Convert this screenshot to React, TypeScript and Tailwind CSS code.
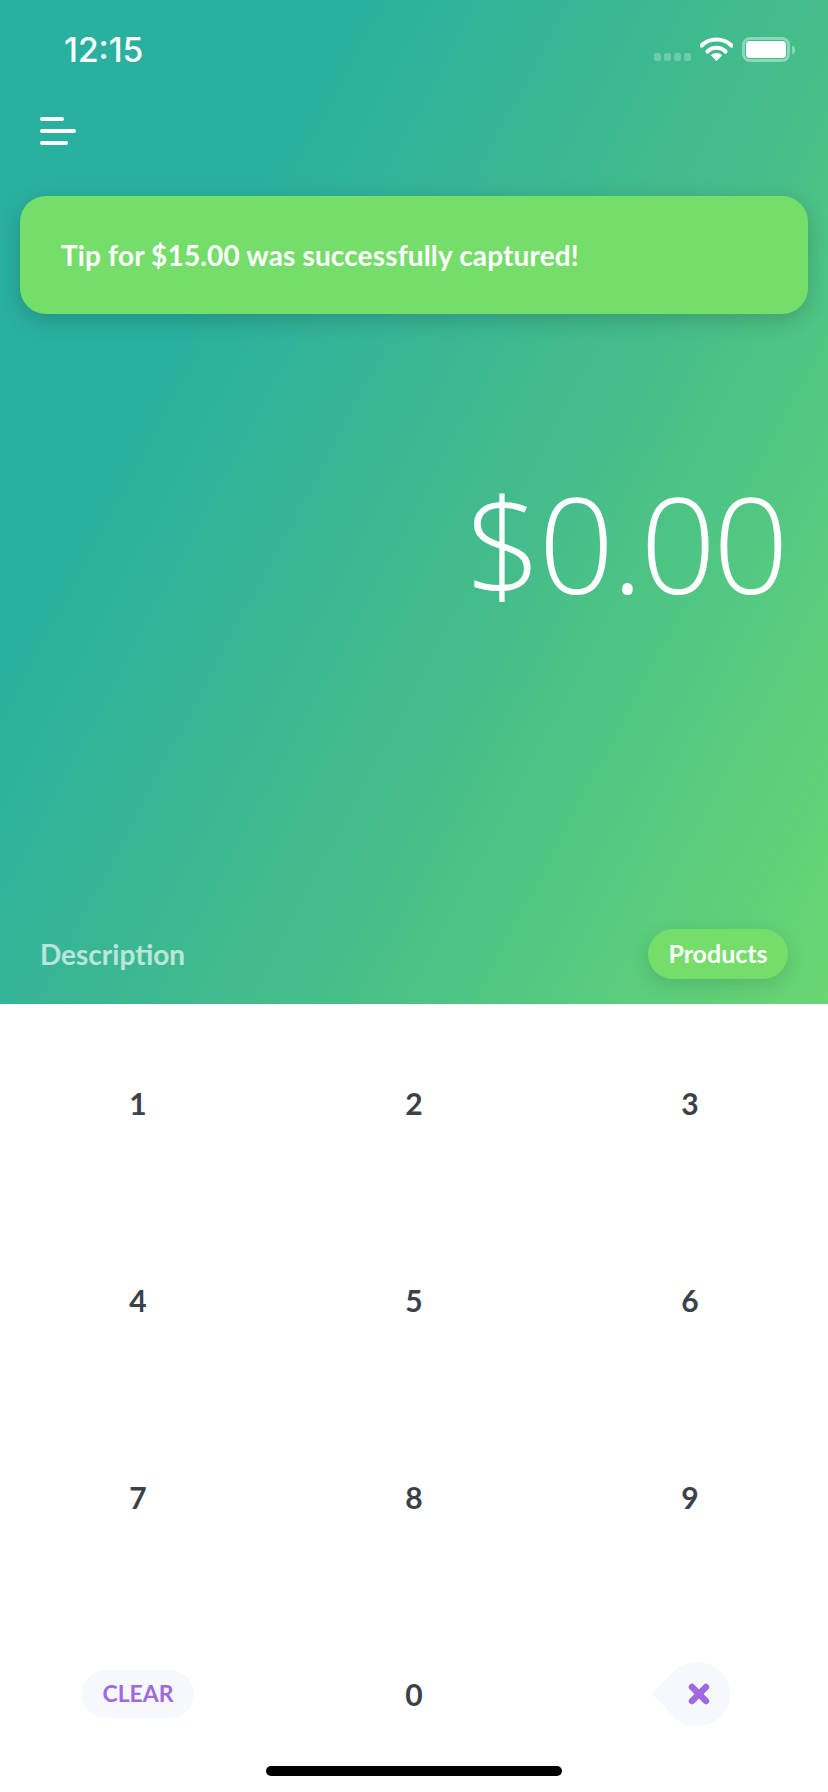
const KEYS = ["1", "2", "3", "4", "5", "6", "7", "8", "9"];

function Key({ label }: { label: string }) {
  return (
    <div className="flex items-center justify-center text-[30px] font-bold leading-none text-[#3a4149]">
      {label}
    </div>
  );
}

function StatusIcons() {
  return (
    <div className="flex items-start">
      <div className="mt-4 flex gap-[3px]">
        <span className="h-2 w-[7px] rounded-[2px] bg-white/25" />
        <span className="h-2 w-[7px] rounded-[2px] bg-white/25" />
        <span className="h-2 w-[7px] rounded-[2px] bg-white/25" />
        <span className="h-2 w-[7px] rounded-[2px] bg-white/25" />
      </div>
      <svg className="ml-[9px]" width="33" height="24" viewBox="0 0 33 24" fill="none">
        <path d="M1.500 8.500C9.500 0.500 23.500 0.500 31.500 8.500" stroke="white" strokeWidth="4.200" strokeLinecap="round" />
        <path d="M7.500 14.500C12.500 9.500 20.500 9.500 25.500 14.500" stroke="white" strokeWidth="4.200" strokeLinecap="round" />
        <path d="M16.500 24L10.800 18.300C14 15.300 19 15.300 22.200 18.300Z" fill="white" />
      </svg>
      <div className="ml-[9px] flex items-center">
        <div className="flex h-[25px] w-12 rounded-[8px] border-[3px] border-white/40 p-[1px]">
          <div className="flex-1 rounded-[4px] bg-white" />
        </div>
        <div className="ml-[2px] h-2 w-[3px] rounded-r-full bg-white/40" />
      </div>
    </div>
  );
}

export default function App() {
  return (
    <div className="relative flex h-[1792px] w-[828px] flex-col overflow-hidden bg-white font-['Lato',sans-serif]">
      <div className="relative z-10 flex h-[1004px] flex-col bg-[linear-gradient(118deg,#2ab09f_0%,#2ab09f_26%,#46bd8a_61%,#56ca80_80%,#6ad672_100%)]">
        <div className="flex items-start justify-between pl-[64px] pr-[33px] pt-[37px]">
          <span className="font-['Inter',sans-serif] text-[33.500px] font-medium leading-[26px] text-white">12:15</span>
          <StatusIcons />
        </div>

        <div className="ml-10 mt-[54px] flex flex-col gap-2">
          <span className="h-1 w-6 rounded-full bg-white" />
          <span className="h-1 w-9 rounded-full bg-white" />
          <span className="h-1 w-7 rounded-full bg-white" />
        </div>

        <div className="mx-5 mt-[51px] flex h-[118px] items-center rounded-[26px] bg-[#75dd6a] pl-[41px] shadow-[0_6px_22px_rgba(0,0,0,0.18)]">
          <span className="text-[28px] font-bold tracking-[0.15px] text-white">Tip for $15.00 was successfully captured!</span>
        </div>

        <div className="mr-[42px] mt-[150px] text-right font-['Open_Sans',sans-serif] text-[133px] font-light leading-[158px] tracking-[-3px] text-white">
          $0.00
        </div>

        <div className="mt-auto flex items-center justify-between pb-[25px] pl-10 pr-10">
          <span className="text-[28px] font-bold text-white/65">Description</span>
          <div className="flex h-[50px] w-[140px] items-center justify-center rounded-full bg-[#75dd6a] text-[25px] font-bold text-white shadow-[0_6px_20px_rgba(0,0,0,0.12)]">
            Products
          </div>
        </div>
      </div>

      <div className="grid flex-1 grid-cols-3 grid-rows-4">
        {KEYS.map((k) => (
          <Key key={k} label={k} />
        ))}
        <div className="flex items-center justify-center">
          <div className="flex h-12 w-28 items-center justify-center rounded-full bg-[#f5f9fd] text-[23px] font-bold text-[#a268e2]">
            CLEAR
          </div>
        </div>
        <Key label="0" />
        <div className="flex items-center justify-center">
          <svg className="ml-[1px]" width="78" height="64" viewBox="0 0 78 64">
            <path d="M0 32L23.500 7.500C29 2.500 36 0 46 0C63.700 0 78 14.300 78 32C78 49.700 63.700 64 46 64C36 64 29 61.500 23.500 56.500Z" fill="#f5f9fd" />
            <path d="M40 25L54 39M54 25L40 39" stroke="#a268e2" strokeWidth="6.500" strokeLinecap="round" />
          </svg>
        </div>
      </div>

      <div className="absolute bottom-4 left-[266px] h-2.5 w-[296px] rounded-full bg-black" />
    </div>
  );
}
